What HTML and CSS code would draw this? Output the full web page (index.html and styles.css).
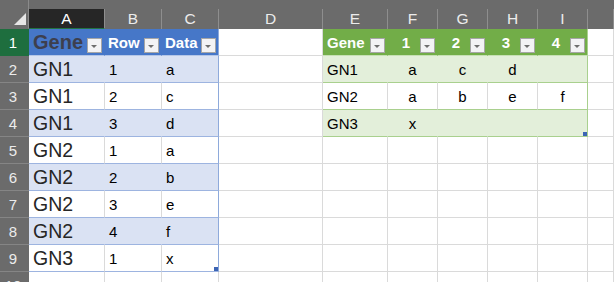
FILE: index.html
```html
<!DOCTYPE html>
<html>
<head>
<meta charset="utf-8">
<link rel="stylesheet" href="styles.css">
</head>
<body>
<div class="sheet">
  <div class="row hdr">
    <div class="corner"><span class="tri"></span></div>
    <div class="ch sel">A</div>
    <div class="ch">B</div>
    <div class="ch">C</div>
    <div class="ch">D</div>
    <div class="ch">E</div>
    <div class="ch">F</div>
    <div class="ch">G</div>
    <div class="ch">H</div>
    <div class="ch">I</div>
    <div class="ch"></div>
  </div>

  <div class="row">
    <div class="rh sel">1</div>
    <div class="c bh big-h"><span class="tx">Gene</span><span class="dd"></span></div>
    <div class="c bh"><span class="tx">Row</span><span class="dd"></span></div>
    <div class="c bh bl"><span class="tx">Data</span><span class="dd"></span></div>
    <div class="c"></div>
    <div class="c gh"><span class="tx">Gene</span><span class="dd"></span></div>
    <div class="c gh"><span class="tx ctr">1</span><span class="dd"></span></div>
    <div class="c gh"><span class="tx ctr">2</span><span class="dd"></span></div>
    <div class="c gh"><span class="tx ctr">3</span><span class="dd"></span></div>
    <div class="c gh gl"><span class="tx ctr">4</span><span class="dd"></span></div>
    <div class="c"></div>
  </div>

  <div class="row">
    <div class="rh">2</div>
    <div class="c bb big">GN1</div>
    <div class="c bb">1</div>
    <div class="c bb bl">a</div>
    <div class="c"></div>
    <div class="c gb">GN1</div>
    <div class="c gb mid">a</div>
    <div class="c gb mid">c</div>
    <div class="c gb mid">d</div>
    <div class="c gb gl"></div>
    <div class="c"></div>
  </div>

  <div class="row">
    <div class="rh">3</div>
    <div class="c bw big">GN1</div>
    <div class="c bw">2</div>
    <div class="c bw bl">c</div>
    <div class="c"></div>
    <div class="c gw">GN2</div>
    <div class="c gw mid">a</div>
    <div class="c gw mid">b</div>
    <div class="c gw mid">e</div>
    <div class="c gw gl mid">f</div>
    <div class="c"></div>
  </div>

  <div class="row">
    <div class="rh">4</div>
    <div class="c bb big">GN1</div>
    <div class="c bb">3</div>
    <div class="c bb bl">d</div>
    <div class="c"></div>
    <div class="c gb">GN3</div>
    <div class="c gb mid">x</div>
    <div class="c gb"></div>
    <div class="c gb"></div>
    <div class="c gb gl end"></div>
    <div class="c"></div>
  </div>

  <div class="row">
    <div class="rh">5</div>
    <div class="c bw big">GN2</div>
    <div class="c bw">1</div>
    <div class="c bw bl">a</div>
    <div class="c"></div>
    <div class="c"></div><div class="c"></div><div class="c"></div><div class="c"></div><div class="c"></div><div class="c"></div>
  </div>

  <div class="row">
    <div class="rh">6</div>
    <div class="c bb big">GN2</div>
    <div class="c bb">2</div>
    <div class="c bb bl">b</div>
    <div class="c"></div>
    <div class="c"></div><div class="c"></div><div class="c"></div><div class="c"></div><div class="c"></div><div class="c"></div>
  </div>

  <div class="row">
    <div class="rh">7</div>
    <div class="c bw big">GN2</div>
    <div class="c bw">3</div>
    <div class="c bw bl">e</div>
    <div class="c"></div>
    <div class="c"></div><div class="c"></div><div class="c"></div><div class="c"></div><div class="c"></div><div class="c"></div>
  </div>

  <div class="row">
    <div class="rh">8</div>
    <div class="c bb big">GN2</div>
    <div class="c bb">4</div>
    <div class="c bb bl">f</div>
    <div class="c"></div>
    <div class="c"></div><div class="c"></div><div class="c"></div><div class="c"></div><div class="c"></div><div class="c"></div>
  </div>

  <div class="row">
    <div class="rh">9</div>
    <div class="c bw big">GN3</div>
    <div class="c bw">1</div>
    <div class="c bw bl end-b">x</div>
    <div class="c"></div>
    <div class="c"></div><div class="c"></div><div class="c"></div><div class="c"></div><div class="c"></div><div class="c"></div>
  </div>

  <div class="row">
    <div class="rh">10</div>
    <div class="c"></div><div class="c"></div><div class="c"></div><div class="c"></div>
    <div class="c"></div><div class="c"></div><div class="c"></div><div class="c"></div><div class="c"></div><div class="c"></div>
  </div>
</div>
</body>
</html>
```

FILE: styles.css
```css
html, body {
  margin: 0;
  padding: 0;
  background: #ffffff;
  overflow: hidden;
}

.sheet {
  width: 614px;
  height: 282px;
  overflow: hidden;
  font-family: "Liberation Sans", Arial, sans-serif;
  font-size: 15px;
  color: #000;
}

.row {
  display: grid;
  grid-template-columns: 29px 76px 57px 57px 104px 65px 50px 50px 50px 50px 1fr;
  height: 27px;
}

.row.hdr {
  height: 29px;
  background: #6b6b6b;
}

.corner {
  position: relative;
  border-right: 1px solid #8a8a8a;
  border-bottom: 1px solid #6b6b6b;
  box-sizing: border-box;
}

.tri {
  position: absolute;
  left: 14px;
  top: 13px;
  width: 12px;
  height: 12px;
  background: #e6e6e6;
  clip-path: polygon(100% 0, 100% 100%, 0 100%);
}

.ch {
  margin-top: 9px;
  box-sizing: border-box;
  border-right: 1px solid #8e8e8e;
  color: #ececec;
  font-size: 15.5px;
  display: flex;
  justify-content: center;
  align-items: flex-end;
  padding-bottom: 2px;
  line-height: 16px;
}

.ch.sel {
  background: #262626;
  color: #ffffff;
  border-bottom: 1px solid #217346;
  padding-bottom: 1px;
}

.rh {
  background: #6b6b6b;
  color: #ececec;
  font-size: 15px;
  box-sizing: border-box;
  border-bottom: 1px solid #858585;
  display: flex;
  justify-content: center;
  align-items: flex-end;
  padding: 0 3px 4px 0;
  line-height: 16px;
}

.rh.sel {
  background: #1e6e3e;
  color: #ffffff;
  border-bottom-color: #1e6e3e;
}

.c {
  box-sizing: border-box;
  border-right: 1px solid #dadada;
  border-bottom: 1px solid #dadada;
  display: flex;
  align-items: flex-end;
  padding: 0 4px 4px 4px;
  line-height: 16px;
  white-space: nowrap;
  position: relative;
}

.c.mid {
  justify-content: center;
}

/* blue table */
.bh {
  background: #4677c8;
  border-right-color: #4677c8;
  border-bottom-color: #b4c6e7;
  color: #ffffff;
  font-weight: bold;
  padding: 0 2px 4px 3px;
}

.bh.big-h {
  color: #3d3f4e;
  font-size: 20px;
  line-height: 20px;
  padding-bottom: 3px;
  padding-left: 4px;
}

.bh .tx {
  flex: 1;
}

.bb {
  background: #dae2f3;
  border-right-color: #dae2f3;
  border-bottom-color: #9db4e0;
}

.bw {
  background: #ffffff;
  border-bottom-color: #9db4e0;
}

.bl {
  border-right-color: #8eaadb;
}

.big {
  font-size: 19.5px;
  line-height: 20px;
  padding-bottom: 3px;
  color: #262626;
}

/* green table */
.gh {
  background: #72ad48;
  border-right-color: #72ad48;
  border-bottom-color: #c6e0b4;
  color: #ffffff;
  font-weight: bold;
  padding: 0 2px 4px 4px;
}

.gh .tx {
  flex: 1;
}

.gh .tx.ctr {
  text-align: center;
}

.gb {
  background: #e3efda;
  border-right-color: #e3efda;
  border-bottom-color: #a9d08e;
}

.gw {
  background: #ffffff;
  border-bottom-color: #a9d08e;
}

.gl {
  border-right-color: #a9d08e;
}

/* dropdown button */
.dd {
  align-self: flex-end;
  margin-bottom: -2px;
  width: 15px;
  height: 15px;
  box-sizing: border-box;
  border: 1px solid #a6a6a6;
  background: #f3f3f5;
  position: relative;
  flex: none;
}

.big-h .dd {
  margin-bottom: -1px;
}

.dd::after {
  content: "";
  position: absolute;
  left: 3px;
  top: 6px;
  width: 0;
  height: 0;
  border-left: 3.5px solid transparent;
  border-right: 3.5px solid transparent;
  border-top: 3.5px solid #6e6e6e;
}

/* table resize handles */
.end::after,
.end-b::after {
  content: "";
  position: absolute;
  right: 0;
  bottom: 0;
  width: 4px;
  height: 4px;
  background: #3c64b4;
}
```
